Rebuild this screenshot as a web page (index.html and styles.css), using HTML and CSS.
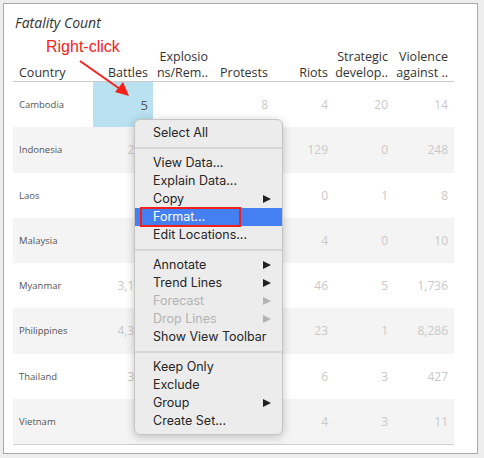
FILE: index.html
```html
<!DOCTYPE html>
<html>
<head>
<meta charset="utf-8">
<link rel="stylesheet" href="styles.css">
</head>
<body>
<div class="frame">
  <div class="title">Fatality Count</div>
  <div class="table">
    <div class="row head">
      <div class="cell country">Country</div>
      <div class="cell">Battles</div>
      <div class="cell">Explosio<br>ns/Rem..</div>
      <div class="cell">Protests</div>
      <div class="cell">Riots</div>
      <div class="cell">Strategic<br>develop..</div>
      <div class="cell">Violence<br>against ..</div>
    </div>
    <div class="row">
      <div class="cell country">Cambodia</div>
      <div class="cell sel">5</div>
      <div class="cell"></div>
      <div class="cell">8</div>
      <div class="cell">4</div>
      <div class="cell">20</div>
      <div class="cell">14</div>
    </div>
    <div class="row alt">
      <div class="cell country">Indonesia</div>
      <div class="cell">232</div>
      <div class="cell">18</div>
      <div class="cell">61</div>
      <div class="cell">129</div>
      <div class="cell">0</div>
      <div class="cell">248</div>
    </div>
    <div class="row">
      <div class="cell country">Laos</div>
      <div class="cell">12</div>
      <div class="cell">3</div>
      <div class="cell">0</div>
      <div class="cell">0</div>
      <div class="cell">1</div>
      <div class="cell">8</div>
    </div>
    <div class="row alt">
      <div class="cell country">Malaysia</div>
      <div class="cell">9</div>
      <div class="cell">0</div>
      <div class="cell">2</div>
      <div class="cell">4</div>
      <div class="cell">0</div>
      <div class="cell">10</div>
    </div>
    <div class="row">
      <div class="cell country">Myanmar</div>
      <div class="cell">3,154</div>
      <div class="cell">612</div>
      <div class="cell">38</div>
      <div class="cell">46</div>
      <div class="cell">5</div>
      <div class="cell">1,736</div>
    </div>
    <div class="row alt">
      <div class="cell country">Philippines</div>
      <div class="cell">4,338</div>
      <div class="cell">245</div>
      <div class="cell">7</div>
      <div class="cell">23</div>
      <div class="cell">1</div>
      <div class="cell">8,286</div>
    </div>
    <div class="row">
      <div class="cell country">Thailand</div>
      <div class="cell">352</div>
      <div class="cell">96</div>
      <div class="cell">11</div>
      <div class="cell">6</div>
      <div class="cell">3</div>
      <div class="cell">427</div>
    </div>
    <div class="row alt">
      <div class="cell country">Vietnam</div>
      <div class="cell">4</div>
      <div class="cell">1</div>
      <div class="cell">9</div>
      <div class="cell">4</div>
      <div class="cell">3</div>
      <div class="cell">11</div>
    </div>
  </div>

  <div class="callout">Right-click</div>
  <svg class="arrow" width="60" height="45" viewBox="0 0 60 45">
    <line x1="3" y1="3" x2="43" y2="31" stroke="#f5221b" stroke-width="2"/>
    <polygon points="52,38 38,34 46,24" fill="#f5221b"/>
  </svg>

  <div class="menu">
    <div class="item">Select All</div>
    <div class="sep"></div>
    <div class="item">View Data...</div>
    <div class="item">Explain Data...</div>
    <div class="item sub">Copy</div>
    <div class="item active">Format...<span class="mark"></span></div>
    <div class="item">Edit Locations...</div>
    <div class="sep"></div>
    <div class="item sub">Annotate</div>
    <div class="item sub">Trend Lines</div>
    <div class="item sub off">Forecast</div>
    <div class="item sub off">Drop Lines</div>
    <div class="item">Show View Toolbar</div>
    <div class="sep"></div>
    <div class="item">Keep Only</div>
    <div class="item">Exclude</div>
    <div class="item sub">Group</div>
    <div class="item">Create Set...</div>
  </div>
</div>
</body>
</html>
```
FILE: styles.css
```css
html, body {
  margin: 0;
  padding: 0;
}
body {
  background: #ededed;
  width: 484px;
  height: 458px;
  overflow: hidden;
  padding-top: 3px;
  box-sizing: border-box;
}
.frame {
  position: relative;
  margin-left: 3px;
  width: 475px;
  height: 451px;
  box-sizing: border-box;
  border: 1px solid #a9a9a9;
  background: #ffffff;
  font-family: "Open Sans", "Noto Sans", sans-serif;
}
.title {
  margin-top: 10px;
  padding-left: 11px;
  height: 18px;
  line-height: 18px;
  font-size: 14px;
  font-style: italic;
  color: #333333;
}
.table {
  margin-left: 9px;
  width: 441px;
  border-bottom: 1px solid #cfcfcf;
}
.row {
  display: grid;
  grid-template-columns: 80px repeat(6, 60px);
  height: 45.25px;
  background: #ffffff;
}
.row.alt {
  background: #f4f4f4;
}
.row.head {
  height: 48px;
  margin-top: 1px;
  border-bottom: 1px solid #cccccc;
  background: #ffffff;
  width: 441px;
}
.cell {
  display: flex;
  align-items: center;
  justify-content: flex-end;
  padding-right: 5px;
  font-size: 12px;
  color: #c9c9c9;
  white-space: nowrap;
}
.head .cell {
  align-items: flex-end;
  text-align: right;
  font-size: 12.5px;
  line-height: 16px;
  color: #333333;
  padding-bottom: 0;
}
.cell.country {
  justify-content: flex-start;
  padding-left: 6px;
  padding-right: 0;
  font-size: 9.5px;
  color: #555555;
}
.head .cell.country {
  font-size: 12.5px;
  color: #333333;
}
.cell.sel {
  background: #b9e1f0;
  color: #555555;
  font-size: 13px;
}
.callout {
  position: absolute;
  left: 42px;
  top: 34px;
  font-family: "Liberation Sans", Arial, sans-serif;
  font-size: 16px;
  line-height: 18px;
  color: #f5221b;
}
.arrow {
  position: absolute;
  left: 73px;
  top: 54px;
}
.menu {
  position: absolute;
  left: 130px;
  top: 115px;
  width: 149px;
  box-sizing: border-box;
  padding: 4px 0;
  background: #ececec;
  border: 1px solid #c4c4c4;
  border-radius: 6px;
  box-shadow: 0 2px 10px rgba(0, 0, 0, 0.22);
  font-family: "Inter", "Roboto", sans-serif;
  font-size: 12.5px;
  color: #262626;
}
.item {
  position: relative;
  height: 18px;
  line-height: 18px;
  padding-left: 18px;
}
.item.sub::after {
  content: "";
  position: absolute;
  right: 11px;
  top: 5px;
  border-left: 8px solid #222222;
  border-top: 4px solid transparent;
  border-bottom: 4px solid transparent;
}
.item.off {
  color: #b3b3b3;
}
.item.off::after {
  border-left-color: #b3b3b3;
}
.item.active {
  background: #4580f2;
  color: #ffffff;
}
.mark {
  position: absolute;
  left: 5px;
  top: -1px;
  width: 101px;
  height: 20px;
  box-sizing: border-box;
  border: 2px solid #f0211b;
}
.sep {
  height: 12px;
  position: relative;
}
.sep::before {
  content: "";
  position: absolute;
  left: 0;
  right: 0;
  top: 5px;
  height: 2px;
  background: #d6d6d6;
}
```
